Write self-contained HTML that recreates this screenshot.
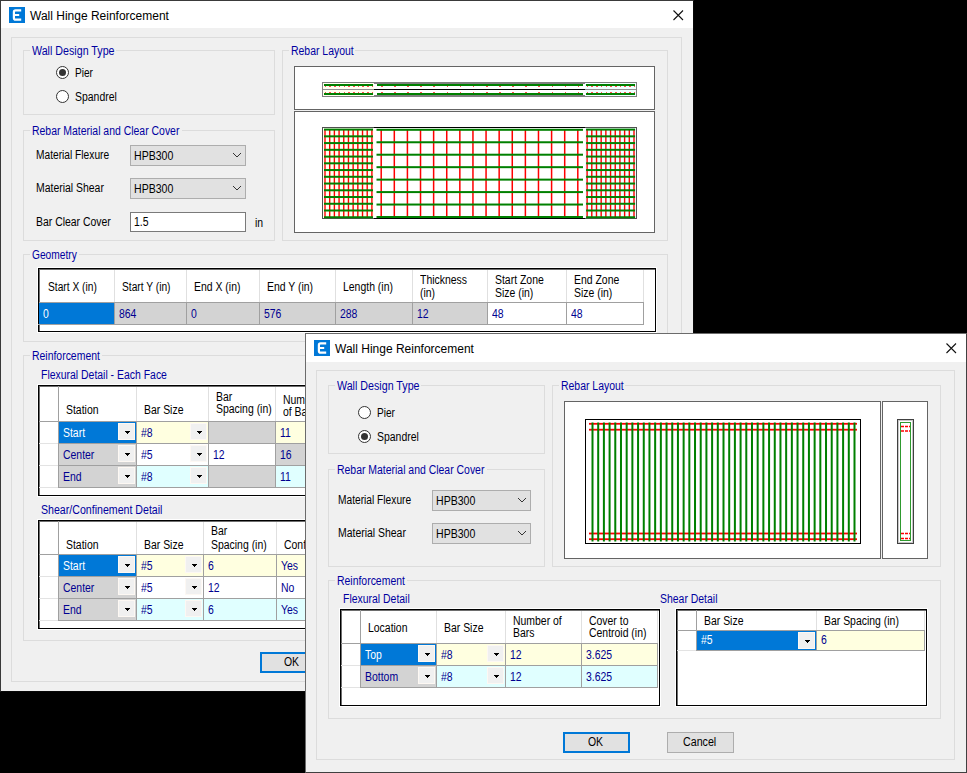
<!DOCTYPE html><html><head><meta charset="utf-8"><style>
*{margin:0;padding:0}
html,body{width:967px;height:773px;overflow:hidden;background:#000;}
body{position:relative;font-family:"Liberation Sans",sans-serif;font-size:12px;}
.a{position:absolute}
.t{position:absolute;white-space:nowrap;line-height:14px;transform-origin:0 0;color:#000;}
.nv{color:#0000a0}
.bk{color:#000}
</style></head><body>
<div class="a" style="left:0;top:0;width:967px;height:773px;overflow:hidden">
<div class="a" style="left:0px;top:0px;width:694px;height:692px;box-sizing:border-box;border:1px solid #3a3a3a;border-right-color:#080808;border-bottom-color:#080808;background:#f0f0f0;"></div>
<div class="a" style="left:1px;top:1px;width:692px;height:27px;background:#fff;"></div>
<div class="a" style="left:9px;top:7px;width:16px;height:16px;background:#0078d7;"></div>
<svg class="a" style="left:9px;top:7px" width="16" height="16"><path d="M12.2 3.4 H6.6 Q4.9 3.4 4.9 5.1 V10.9 Q4.9 12.6 6.6 12.6 H12.2 M4.9 8 H10.2" fill="none" stroke="#fff" stroke-width="2.2"/></svg>
<div class="t bk" style="left:30px;top:9px;">Wall Hinge Reinforcement</div>
<svg class="a" style="left:673px;top:10px" width="11" height="11"><path d="M0.5 0.5 L10 10 M10 0.5 L0.5 10" fill="none" stroke="#111" stroke-width="1.1"/></svg>
<div class="a" style="left:11px;top:37px;width:671px;height:645px;box-sizing:border-box;border:1px solid #dcdcdc;"></div>
<div class="a" style="left:23px;top:50px;width:252px;height:65px;box-sizing:border-box;border:1px solid #dcdcdc;"></div>
<div class="a" style="left:30px;top:49px;width:86px;height:3px;background:#f0f0f0;"></div>
<div class="t nv" style="left:32px;top:44px;transform:scaleX(0.89);">Wall Design Type</div>
<div class="a" style="left:56px;top:66px;width:13px;height:13px;box-sizing:border-box;border:1px solid #333;border-radius:50%;background:#fff;"></div>
<div class="a" style="left:59px;top:69px;width:7px;height:7px;border-radius:50%;background:#333;"></div>
<div class="t bk" style="left:75px;top:66px;transform:scaleX(0.84);">Pier</div>
<div class="a" style="left:56px;top:90px;width:13px;height:13px;box-sizing:border-box;border:1px solid #333;border-radius:50%;background:#fff;"></div>
<div class="t bk" style="left:75px;top:90px;transform:scaleX(0.87);">Spandrel</div>
<div class="a" style="left:23px;top:130px;width:252px;height:111px;box-sizing:border-box;border:1px solid #dcdcdc;"></div>
<div class="a" style="left:30px;top:129px;width:152px;height:3px;background:#f0f0f0;"></div>
<div class="t nv" style="left:32px;top:124px;transform:scaleX(0.87);">Rebar Material and Clear Cover</div>
<div class="t bk" style="left:36px;top:148px;transform:scaleX(0.85);">Material Flexure</div>
<div class="a" style="left:130px;top:145px;width:116px;height:21px;box-sizing:border-box;border:1px solid #adadad;background:#e1e1e1;"></div>
<div class="t bk" style="left:134px;top:149px;transform:scaleX(0.88);">HPB300</div>
<svg class="a" style="left:232px;top:152px" width="10" height="6"><path d="M1 1 L5 5 L9 1" fill="none" stroke="#333" stroke-width="1"/></svg>
<div class="t bk" style="left:36px;top:181px;transform:scaleX(0.87);">Material Shear</div>
<div class="a" style="left:130px;top:178px;width:116px;height:21px;box-sizing:border-box;border:1px solid #adadad;background:#e1e1e1;"></div>
<div class="t bk" style="left:134px;top:182px;transform:scaleX(0.88);">HPB300</div>
<svg class="a" style="left:232px;top:185px" width="10" height="6"><path d="M1 1 L5 5 L9 1" fill="none" stroke="#333" stroke-width="1"/></svg>
<div class="t bk" style="left:36px;top:215px;transform:scaleX(0.87);">Bar Clear Cover</div>
<div class="a" style="left:130px;top:212px;width:116px;height:20px;box-sizing:border-box;border:1px solid #7a7a7a;background:#fff;"></div>
<div class="t bk" style="left:134px;top:215px;transform:scaleX(0.87);">1.5</div>
<div class="t bk" style="left:255px;top:216px;transform:scaleX(0.87);">in</div>
<div class="a" style="left:282px;top:50px;width:386px;height:191px;box-sizing:border-box;border:1px solid #dcdcdc;"></div>
<div class="a" style="left:289px;top:49px;width:66px;height:3px;background:#f0f0f0;"></div>
<div class="t nv" style="left:291px;top:44px;transform:scaleX(0.87);">Rebar Layout</div>
<div class="a" style="left:294px;top:66px;width:361px;height:44px;box-sizing:border-box;border:1px solid #646464;background:#fff;"></div>
<div class="a" style="left:294px;top:111px;width:361px;height:122px;box-sizing:border-box;border:1px solid #646464;background:#fff;"></div>
<svg class="a" style="left:0;top:0" width="967" height="773" shape-rendering="crispEdges">
<rect x="322" y="82" width="315" height="15" fill="#808080"/>
<rect x="323" y="83" width="313" height="13" fill="#fff"/>
<rect x="323" y="83" width="51" height="13" fill="#fffff0"/>
<rect x="585" y="83" width="51" height="13" fill="#f0ffff"/>
<rect x="374" y="83" width="211" height="1" fill="#808080"/>
<rect x="374" y="95" width="211" height="1" fill="#808080"/>
<rect x="323" y="89" width="51" height="1" fill="#909090"/>
<rect x="585" y="89" width="51" height="1" fill="#909090"/>
<rect x="374" y="89" width="211" height="1" fill="#000"/>
<rect x="324" y="84" width="49" height="2" fill="#008000"/>
<rect x="324" y="93" width="49" height="2" fill="#008000"/>
<rect x="376.5" y="84" width="206.5" height="2" fill="#008000"/>
<rect x="376.5" y="93" width="206.5" height="2" fill="#008000"/>
<rect x="586" y="84" width="49" height="2" fill="#008000"/>
<rect x="586" y="93" width="49" height="2" fill="#008000"/>
<rect x="324.7" y="86" width="1.6" height="1" fill="#ff5050"/>
<rect x="324.7" y="92" width="1.6" height="1" fill="#ff5050"/>
<rect x="586.7" y="86" width="1.6" height="1" fill="#ff5050"/>
<rect x="586.7" y="92" width="1.6" height="1" fill="#ff5050"/>
<rect x="329.4" y="86" width="1.6" height="1" fill="#ff5050"/>
<rect x="329.4" y="92" width="1.6" height="1" fill="#ff5050"/>
<rect x="591.4" y="86" width="1.6" height="1" fill="#ff5050"/>
<rect x="591.4" y="92" width="1.6" height="1" fill="#ff5050"/>
<rect x="334.1" y="86" width="1.6" height="1" fill="#ff5050"/>
<rect x="334.1" y="92" width="1.6" height="1" fill="#ff5050"/>
<rect x="596.1" y="86" width="1.6" height="1" fill="#ff5050"/>
<rect x="596.1" y="92" width="1.6" height="1" fill="#ff5050"/>
<rect x="338.8" y="86" width="1.6" height="1" fill="#ff5050"/>
<rect x="338.8" y="92" width="1.6" height="1" fill="#ff5050"/>
<rect x="600.8" y="86" width="1.6" height="1" fill="#ff5050"/>
<rect x="600.8" y="92" width="1.6" height="1" fill="#ff5050"/>
<rect x="343.5" y="86" width="1.6" height="1" fill="#ff5050"/>
<rect x="343.5" y="92" width="1.6" height="1" fill="#ff5050"/>
<rect x="605.5" y="86" width="1.6" height="1" fill="#ff5050"/>
<rect x="605.5" y="92" width="1.6" height="1" fill="#ff5050"/>
<rect x="348.2" y="86" width="1.6" height="1" fill="#ff5050"/>
<rect x="348.2" y="92" width="1.6" height="1" fill="#ff5050"/>
<rect x="610.2" y="86" width="1.6" height="1" fill="#ff5050"/>
<rect x="610.2" y="92" width="1.6" height="1" fill="#ff5050"/>
<rect x="352.9" y="86" width="1.6" height="1" fill="#ff5050"/>
<rect x="352.9" y="92" width="1.6" height="1" fill="#ff5050"/>
<rect x="614.9" y="86" width="1.6" height="1" fill="#ff5050"/>
<rect x="614.9" y="92" width="1.6" height="1" fill="#ff5050"/>
<rect x="357.6" y="86" width="1.6" height="1" fill="#ff5050"/>
<rect x="357.6" y="92" width="1.6" height="1" fill="#ff5050"/>
<rect x="619.6" y="86" width="1.6" height="1" fill="#ff5050"/>
<rect x="619.6" y="92" width="1.6" height="1" fill="#ff5050"/>
<rect x="362.3" y="86" width="1.6" height="1" fill="#ff5050"/>
<rect x="362.3" y="92" width="1.6" height="1" fill="#ff5050"/>
<rect x="624.3" y="86" width="1.6" height="1" fill="#ff5050"/>
<rect x="624.3" y="92" width="1.6" height="1" fill="#ff5050"/>
<rect x="367" y="86" width="1.6" height="1" fill="#ff5050"/>
<rect x="367" y="92" width="1.6" height="1" fill="#ff5050"/>
<rect x="629" y="86" width="1.6" height="1" fill="#ff5050"/>
<rect x="629" y="92" width="1.6" height="1" fill="#ff5050"/>
<rect x="371.7" y="86" width="1.6" height="1" fill="#ff5050"/>
<rect x="371.7" y="92" width="1.6" height="1" fill="#ff5050"/>
<rect x="633.7" y="86" width="1.6" height="1" fill="#ff5050"/>
<rect x="633.7" y="92" width="1.6" height="1" fill="#ff5050"/>
<rect x="380.9" y="86" width="1.6" height="1" fill="#ff5050"/>
<rect x="380.9" y="92" width="1.6" height="1" fill="#ff5050"/>
<rect x="394.03" y="86" width="1.6" height="1" fill="#ff5050"/>
<rect x="394.03" y="92" width="1.6" height="1" fill="#ff5050"/>
<rect x="407.16" y="86" width="1.6" height="1" fill="#ff5050"/>
<rect x="407.16" y="92" width="1.6" height="1" fill="#ff5050"/>
<rect x="420.29" y="86" width="1.6" height="1" fill="#ff5050"/>
<rect x="420.29" y="92" width="1.6" height="1" fill="#ff5050"/>
<rect x="433.42" y="86" width="1.6" height="1" fill="#ff5050"/>
<rect x="433.42" y="92" width="1.6" height="1" fill="#ff5050"/>
<rect x="446.55" y="86" width="1.6" height="1" fill="#ff5050"/>
<rect x="446.55" y="92" width="1.6" height="1" fill="#ff5050"/>
<rect x="459.68" y="86" width="1.6" height="1" fill="#ff5050"/>
<rect x="459.68" y="92" width="1.6" height="1" fill="#ff5050"/>
<rect x="472.81" y="86" width="1.6" height="1" fill="#ff5050"/>
<rect x="472.81" y="92" width="1.6" height="1" fill="#ff5050"/>
<rect x="485.94" y="86" width="1.6" height="1" fill="#ff5050"/>
<rect x="485.94" y="92" width="1.6" height="1" fill="#ff5050"/>
<rect x="499.07" y="86" width="1.6" height="1" fill="#ff5050"/>
<rect x="499.07" y="92" width="1.6" height="1" fill="#ff5050"/>
<rect x="512.2" y="86" width="1.6" height="1" fill="#ff5050"/>
<rect x="512.2" y="92" width="1.6" height="1" fill="#ff5050"/>
<rect x="525.33" y="86" width="1.6" height="1" fill="#ff5050"/>
<rect x="525.33" y="92" width="1.6" height="1" fill="#ff5050"/>
<rect x="538.46" y="86" width="1.6" height="1" fill="#ff5050"/>
<rect x="538.46" y="92" width="1.6" height="1" fill="#ff5050"/>
<rect x="551.59" y="86" width="1.6" height="1" fill="#ff5050"/>
<rect x="551.59" y="92" width="1.6" height="1" fill="#ff5050"/>
<rect x="564.72" y="86" width="1.6" height="1" fill="#ff5050"/>
<rect x="564.72" y="92" width="1.6" height="1" fill="#ff5050"/>
<rect x="577.85" y="86" width="1.6" height="1" fill="#ff5050"/>
<rect x="577.85" y="92" width="1.6" height="1" fill="#ff5050"/>
<rect x="322" y="127" width="315" height="92" fill="#505050"/>
<rect x="323" y="128" width="313" height="90" fill="#fff"/>
<rect x="323" y="128" width="51" height="90" fill="#fffff0"/>
<rect x="585" y="128" width="51" height="90" fill="#f0ffff"/>
<rect x="374" y="127" width="211" height="1" fill="#000"/>
<rect x="374" y="218" width="211" height="1" fill="#000"/>
</svg>
<svg class="a" style="left:0;top:0" width="967" height="773">
<rect x="324.3" y="129" width="1.4" height="89" fill="#ff0000"/>
<rect x="328.99" y="129" width="1.4" height="89" fill="#ff0000"/>
<rect x="333.68" y="129" width="1.4" height="89" fill="#ff0000"/>
<rect x="338.37" y="129" width="1.4" height="89" fill="#ff0000"/>
<rect x="343.06" y="129" width="1.4" height="89" fill="#ff0000"/>
<rect x="347.75" y="129" width="1.4" height="89" fill="#ff0000"/>
<rect x="352.44" y="129" width="1.4" height="89" fill="#ff0000"/>
<rect x="357.13" y="129" width="1.4" height="89" fill="#ff0000"/>
<rect x="361.82" y="129" width="1.4" height="89" fill="#ff0000"/>
<rect x="366.51" y="129" width="1.4" height="89" fill="#ff0000"/>
<rect x="371.2" y="129" width="1.4" height="89" fill="#ff0000"/>
<rect x="324" y="128.6" width="49" height="2" fill="#008000"/>
<rect x="324" y="135.34" width="49" height="2" fill="#008000"/>
<rect x="324" y="142.08" width="49" height="2" fill="#008000"/>
<rect x="324" y="148.83" width="49" height="2" fill="#008000"/>
<rect x="324" y="155.57" width="49" height="2" fill="#008000"/>
<rect x="324" y="162.31" width="49" height="2" fill="#008000"/>
<rect x="324" y="169.05" width="49" height="2" fill="#008000"/>
<rect x="324" y="175.79" width="49" height="2" fill="#008000"/>
<rect x="324" y="182.54" width="49" height="2" fill="#008000"/>
<rect x="324" y="189.28" width="49" height="2" fill="#008000"/>
<rect x="324" y="196.02" width="49" height="2" fill="#008000"/>
<rect x="324" y="202.76" width="49" height="2" fill="#008000"/>
<rect x="324" y="209.5" width="49" height="2" fill="#008000"/>
<rect x="324" y="216.25" width="49" height="2" fill="#008000"/>
<rect x="586.4" y="129" width="1.4" height="89" fill="#ff0000"/>
<rect x="591.09" y="129" width="1.4" height="89" fill="#ff0000"/>
<rect x="595.78" y="129" width="1.4" height="89" fill="#ff0000"/>
<rect x="600.47" y="129" width="1.4" height="89" fill="#ff0000"/>
<rect x="605.16" y="129" width="1.4" height="89" fill="#ff0000"/>
<rect x="609.85" y="129" width="1.4" height="89" fill="#ff0000"/>
<rect x="614.54" y="129" width="1.4" height="89" fill="#ff0000"/>
<rect x="619.23" y="129" width="1.4" height="89" fill="#ff0000"/>
<rect x="623.92" y="129" width="1.4" height="89" fill="#ff0000"/>
<rect x="628.61" y="129" width="1.4" height="89" fill="#ff0000"/>
<rect x="633.3" y="129" width="1.4" height="89" fill="#ff0000"/>
<rect x="586.1" y="128.6" width="49" height="2" fill="#008000"/>
<rect x="586.1" y="135.34" width="49" height="2" fill="#008000"/>
<rect x="586.1" y="142.08" width="49" height="2" fill="#008000"/>
<rect x="586.1" y="148.83" width="49" height="2" fill="#008000"/>
<rect x="586.1" y="155.57" width="49" height="2" fill="#008000"/>
<rect x="586.1" y="162.31" width="49" height="2" fill="#008000"/>
<rect x="586.1" y="169.05" width="49" height="2" fill="#008000"/>
<rect x="586.1" y="175.79" width="49" height="2" fill="#008000"/>
<rect x="586.1" y="182.54" width="49" height="2" fill="#008000"/>
<rect x="586.1" y="189.28" width="49" height="2" fill="#008000"/>
<rect x="586.1" y="196.02" width="49" height="2" fill="#008000"/>
<rect x="586.1" y="202.76" width="49" height="2" fill="#008000"/>
<rect x="586.1" y="209.5" width="49" height="2" fill="#008000"/>
<rect x="586.1" y="216.25" width="49" height="2" fill="#008000"/>
<rect x="380.45" y="129" width="1.5" height="89" fill="#ff0000"/>
<rect x="393.56" y="129" width="1.5" height="89" fill="#ff0000"/>
<rect x="406.66" y="129" width="1.5" height="89" fill="#ff0000"/>
<rect x="419.77" y="129" width="1.5" height="89" fill="#ff0000"/>
<rect x="432.88" y="129" width="1.5" height="89" fill="#ff0000"/>
<rect x="445.99" y="129" width="1.5" height="89" fill="#ff0000"/>
<rect x="459.09" y="129" width="1.5" height="89" fill="#ff0000"/>
<rect x="472.2" y="129" width="1.5" height="89" fill="#ff0000"/>
<rect x="485.31" y="129" width="1.5" height="89" fill="#ff0000"/>
<rect x="498.41" y="129" width="1.5" height="89" fill="#ff0000"/>
<rect x="511.52" y="129" width="1.5" height="89" fill="#ff0000"/>
<rect x="524.63" y="129" width="1.5" height="89" fill="#ff0000"/>
<rect x="537.73" y="129" width="1.5" height="89" fill="#ff0000"/>
<rect x="550.84" y="129" width="1.5" height="89" fill="#ff0000"/>
<rect x="563.95" y="129" width="1.5" height="89" fill="#ff0000"/>
<rect x="577.05" y="129" width="1.5" height="89" fill="#ff0000"/>
<rect x="376.5" y="128.8" width="206.5" height="2" fill="#008000"/>
<rect x="376.5" y="141.26" width="206.5" height="2" fill="#008000"/>
<rect x="376.5" y="153.71" width="206.5" height="2" fill="#008000"/>
<rect x="376.5" y="166.17" width="206.5" height="2" fill="#008000"/>
<rect x="376.5" y="178.63" width="206.5" height="2" fill="#008000"/>
<rect x="376.5" y="191.09" width="206.5" height="2" fill="#008000"/>
<rect x="376.5" y="203.54" width="206.5" height="2" fill="#008000"/>
<rect x="376.5" y="216" width="206.5" height="2" fill="#008000"/>
</svg>
<div class="a" style="left:23px;top:254px;width:645px;height:88px;box-sizing:border-box;border:1px solid #dcdcdc;"></div>
<div class="a" style="left:30px;top:253px;width:49px;height:3px;background:#f0f0f0;"></div>
<div class="t nv" style="left:32px;top:248px;transform:scaleX(0.85);">Geometry</div>
<div class="a" style="left:37px;top:267px;width:620px;height:66px;box-sizing:border-box;border:1px solid #fff;"></div>
<div class="a" style="left:38px;top:268px;width:618px;height:64px;box-sizing:border-box;border:1px solid #000;background:#fff;"></div>
<div class="a" style="left:39px;top:269px;width:616px;height:1px;background:#6e6e6e;"></div>
<div class="a" style="left:39px;top:269px;width:1px;height:62px;background:#6e6e6e;"></div>
<div class="a" style="left:114px;top:270px;width:1px;height:32px;background:#e0e0e0;"></div>
<div class="a" style="left:186px;top:270px;width:1px;height:32px;background:#e0e0e0;"></div>
<div class="a" style="left:259px;top:270px;width:1px;height:32px;background:#e0e0e0;"></div>
<div class="a" style="left:335px;top:270px;width:1px;height:32px;background:#e0e0e0;"></div>
<div class="a" style="left:412px;top:270px;width:1px;height:32px;background:#e0e0e0;"></div>
<div class="a" style="left:487px;top:270px;width:1px;height:32px;background:#e0e0e0;"></div>
<div class="a" style="left:566px;top:270px;width:1px;height:32px;background:#e0e0e0;"></div>
<div class="a" style="left:643px;top:270px;width:1px;height:32px;background:#e0e0e0;"></div>
<div class="a" style="left:39px;top:302px;width:605px;height:1px;background:#a0a0a0;"></div>
<div class="t bk" style="left:48px;top:280px;transform:scaleX(0.852);">Start X (in)</div>
<div class="t bk" style="left:122px;top:280px;transform:scaleX(0.852);">Start Y (in)</div>
<div class="t bk" style="left:194px;top:280px;transform:scaleX(0.87);">End X (in)</div>
<div class="t bk" style="left:267px;top:280px;transform:scaleX(0.87);">End Y (in)</div>
<div class="t bk" style="left:343px;top:280px;transform:scaleX(0.87);">Length (in)</div>
<div class="t bk" style="left:420px;top:273px;transform:scaleX(0.87);">Thickness</div>
<div class="t bk" style="left:420px;top:286px;transform:scaleX(0.87);">(in)</div>
<div class="t bk" style="left:495px;top:273px;transform:scaleX(0.87);">Start Zone</div>
<div class="t bk" style="left:495px;top:286px;transform:scaleX(0.87);">Size (in)</div>
<div class="t bk" style="left:574px;top:273px;transform:scaleX(0.87);">End Zone</div>
<div class="t bk" style="left:574px;top:286px;transform:scaleX(0.87);">Size (in)</div>
<div class="a" style="left:39px;top:303px;width:75px;height:21px;background:#0078d7;"></div>
<div class="a" style="left:114px;top:302px;width:1px;height:23px;background:#a0a0a0;"></div>
<div class="a" style="left:38px;top:324px;width:77px;height:1px;background:#a0a0a0;"></div>
<div class="t " style="left:42.5px;top:307px;color:#fff;transform:scaleX(0.87);">0</div>
<div class="a" style="left:115px;top:303px;width:71px;height:21px;background:#d3d3d3;"></div>
<div class="a" style="left:186px;top:302px;width:1px;height:23px;background:#a0a0a0;"></div>
<div class="a" style="left:114px;top:324px;width:73px;height:1px;background:#a0a0a0;"></div>
<div class="t " style="left:118.5px;top:307px;color:#000090;transform:scaleX(0.87);">864</div>
<div class="a" style="left:187px;top:303px;width:72px;height:21px;background:#d3d3d3;"></div>
<div class="a" style="left:259px;top:302px;width:1px;height:23px;background:#a0a0a0;"></div>
<div class="a" style="left:186px;top:324px;width:74px;height:1px;background:#a0a0a0;"></div>
<div class="t " style="left:190.5px;top:307px;color:#000090;transform:scaleX(0.87);">0</div>
<div class="a" style="left:260px;top:303px;width:75px;height:21px;background:#d3d3d3;"></div>
<div class="a" style="left:335px;top:302px;width:1px;height:23px;background:#a0a0a0;"></div>
<div class="a" style="left:259px;top:324px;width:77px;height:1px;background:#a0a0a0;"></div>
<div class="t " style="left:263.5px;top:307px;color:#000090;transform:scaleX(0.87);">576</div>
<div class="a" style="left:336px;top:303px;width:76px;height:21px;background:#d3d3d3;"></div>
<div class="a" style="left:412px;top:302px;width:1px;height:23px;background:#a0a0a0;"></div>
<div class="a" style="left:335px;top:324px;width:78px;height:1px;background:#a0a0a0;"></div>
<div class="t " style="left:339.5px;top:307px;color:#000090;transform:scaleX(0.87);">288</div>
<div class="a" style="left:413px;top:303px;width:74px;height:21px;background:#d3d3d3;"></div>
<div class="a" style="left:487px;top:302px;width:1px;height:23px;background:#a0a0a0;"></div>
<div class="a" style="left:412px;top:324px;width:76px;height:1px;background:#a0a0a0;"></div>
<div class="t " style="left:416.5px;top:307px;color:#000090;transform:scaleX(0.87);">12</div>
<div class="a" style="left:488px;top:303px;width:78px;height:21px;background:#fff;"></div>
<div class="a" style="left:566px;top:302px;width:1px;height:23px;background:#a0a0a0;"></div>
<div class="a" style="left:487px;top:324px;width:80px;height:1px;background:#a0a0a0;"></div>
<div class="t " style="left:491.5px;top:307px;color:#000090;transform:scaleX(0.87);">48</div>
<div class="a" style="left:567px;top:303px;width:76px;height:21px;background:#fff;"></div>
<div class="a" style="left:643px;top:302px;width:1px;height:23px;background:#a0a0a0;"></div>
<div class="a" style="left:566px;top:324px;width:78px;height:1px;background:#a0a0a0;"></div>
<div class="t " style="left:570.5px;top:307px;color:#000090;transform:scaleX(0.87);">48</div>
<div class="a" style="left:23px;top:355px;width:645px;height:286px;box-sizing:border-box;border:1px solid #dcdcdc;"></div>
<div class="a" style="left:30px;top:354px;width:72px;height:3px;background:#f0f0f0;"></div>
<div class="t nv" style="left:32px;top:349px;transform:scaleX(0.87);">Reinforcement</div>
<div class="t nv" style="left:41px;top:368px;transform:scaleX(0.87);">Flexural Detail - Each Face</div>
<div class="a" style="left:37px;top:384px;width:665px;height:113px;box-sizing:border-box;border:1px solid #fff;"></div>
<div class="a" style="left:38px;top:385px;width:663px;height:111px;box-sizing:border-box;border:1px solid #000;background:#fff;"></div>
<div class="a" style="left:39px;top:386px;width:661px;height:1px;background:#6e6e6e;"></div>
<div class="a" style="left:39px;top:386px;width:1px;height:109px;background:#6e6e6e;"></div>
<div class="a" style="left:58px;top:386px;width:1px;height:102px;background:#a0a0a0;"></div>
<div class="a" style="left:136px;top:387px;width:1px;height:34px;background:#e0e0e0;"></div>
<div class="a" style="left:208px;top:387px;width:1px;height:34px;background:#e0e0e0;"></div>
<div class="a" style="left:275px;top:387px;width:1px;height:34px;background:#e0e0e0;"></div>
<div class="a" style="left:360px;top:387px;width:1px;height:34px;background:#e0e0e0;"></div>
<div class="a" style="left:39px;top:421px;width:322px;height:1px;background:#a0a0a0;"></div>
<div class="t bk" style="left:66px;top:403px;transform:scaleX(0.87);">Station</div>
<div class="t bk" style="left:144px;top:403px;transform:scaleX(0.87);">Bar Size</div>
<div class="t bk" style="left:216px;top:390px;transform:scaleX(0.87);">Bar</div>
<div class="t bk" style="left:216px;top:402px;transform:scaleX(0.87);">Spacing (in)</div>
<div class="t bk" style="left:283px;top:393px;transform:scaleX(0.87);">Number</div>
<div class="t bk" style="left:283px;top:405px;transform:scaleX(0.87);">of Bars</div>
<div class="a" style="left:39px;top:443px;width:19px;height:1px;background:#e3e3e3;"></div>
<div class="a" style="left:59px;top:422px;width:77px;height:21px;background:#0078d7;"></div>
<div class="a" style="left:136px;top:421px;width:1px;height:23px;background:#a0a0a0;"></div>
<div class="a" style="left:58px;top:443px;width:79px;height:1px;background:#a0a0a0;"></div>
<div class="t " style="left:62.5px;top:426px;color:#fff;transform:scaleX(0.87);">Start</div>
<div class="a" style="left:118px;top:423px;width:17px;height:17px;box-sizing:border-box;border:1px solid #fdf8f3;background:#f0f0f0;"></div>
<svg class="a" style="left:125px;top:431px" width="5" height="3" shape-rendering="crispEdges"><path d="M0 0h5v1h-1v1h-1v1h-1v-1h-1v-1h-1z" fill="#000"/></svg>
<div class="a" style="left:137px;top:422px;width:71px;height:21px;background:#ffffe0;"></div>
<div class="a" style="left:208px;top:421px;width:1px;height:23px;background:#a0a0a0;"></div>
<div class="a" style="left:136px;top:443px;width:73px;height:1px;background:#a0a0a0;"></div>
<div class="t " style="left:140.5px;top:426px;color:#000090;transform:scaleX(0.87);">#8</div>
<div class="a" style="left:190px;top:423px;width:17px;height:17px;box-sizing:border-box;border:1px solid #fdf8f3;background:#f0f0f0;"></div>
<svg class="a" style="left:197px;top:431px" width="5" height="3" shape-rendering="crispEdges"><path d="M0 0h5v1h-1v1h-1v1h-1v-1h-1v-1h-1z" fill="#000"/></svg>
<div class="a" style="left:209px;top:422px;width:66px;height:21px;background:#d3d3d3;"></div>
<div class="a" style="left:275px;top:421px;width:1px;height:23px;background:#a0a0a0;"></div>
<div class="a" style="left:208px;top:443px;width:68px;height:1px;background:#a0a0a0;"></div>
<div class="a" style="left:276px;top:422px;width:84px;height:21px;background:#ffffe0;"></div>
<div class="a" style="left:360px;top:421px;width:1px;height:23px;background:#a0a0a0;"></div>
<div class="a" style="left:275px;top:443px;width:86px;height:1px;background:#a0a0a0;"></div>
<div class="t " style="left:279.5px;top:426px;color:#000090;transform:scaleX(0.87);">11</div>
<div class="a" style="left:39px;top:465px;width:19px;height:1px;background:#e3e3e3;"></div>
<div class="a" style="left:59px;top:444px;width:77px;height:21px;background:#d3d3d3;"></div>
<div class="a" style="left:136px;top:443px;width:1px;height:23px;background:#a0a0a0;"></div>
<div class="a" style="left:58px;top:465px;width:79px;height:1px;background:#a0a0a0;"></div>
<div class="t " style="left:62.5px;top:448px;color:#000090;transform:scaleX(0.87);">Center</div>
<div class="a" style="left:118px;top:445px;width:17px;height:17px;box-sizing:border-box;border:1px solid #fdf8f3;background:#f0f0f0;"></div>
<svg class="a" style="left:125px;top:453px" width="5" height="3" shape-rendering="crispEdges"><path d="M0 0h5v1h-1v1h-1v1h-1v-1h-1v-1h-1z" fill="#000"/></svg>
<div class="a" style="left:137px;top:444px;width:71px;height:21px;background:#fff;"></div>
<div class="a" style="left:208px;top:443px;width:1px;height:23px;background:#a0a0a0;"></div>
<div class="a" style="left:136px;top:465px;width:73px;height:1px;background:#a0a0a0;"></div>
<div class="t " style="left:140.5px;top:448px;color:#000090;transform:scaleX(0.87);">#5</div>
<div class="a" style="left:190px;top:445px;width:17px;height:17px;box-sizing:border-box;border:1px solid #fdf8f3;background:#f0f0f0;"></div>
<svg class="a" style="left:197px;top:453px" width="5" height="3" shape-rendering="crispEdges"><path d="M0 0h5v1h-1v1h-1v1h-1v-1h-1v-1h-1z" fill="#000"/></svg>
<div class="a" style="left:209px;top:444px;width:66px;height:21px;background:#fff;"></div>
<div class="a" style="left:275px;top:443px;width:1px;height:23px;background:#a0a0a0;"></div>
<div class="a" style="left:208px;top:465px;width:68px;height:1px;background:#a0a0a0;"></div>
<div class="t " style="left:212.5px;top:448px;color:#000090;transform:scaleX(0.87);">12</div>
<div class="a" style="left:276px;top:444px;width:84px;height:21px;background:#d3d3d3;"></div>
<div class="a" style="left:360px;top:443px;width:1px;height:23px;background:#a0a0a0;"></div>
<div class="a" style="left:275px;top:465px;width:86px;height:1px;background:#a0a0a0;"></div>
<div class="t " style="left:279.5px;top:448px;color:#000090;transform:scaleX(0.87);">16</div>
<div class="a" style="left:39px;top:487px;width:19px;height:1px;background:#e3e3e3;"></div>
<div class="a" style="left:59px;top:466px;width:77px;height:21px;background:#d3d3d3;"></div>
<div class="a" style="left:136px;top:465px;width:1px;height:23px;background:#a0a0a0;"></div>
<div class="a" style="left:58px;top:487px;width:79px;height:1px;background:#a0a0a0;"></div>
<div class="t " style="left:62.5px;top:470px;color:#000090;transform:scaleX(0.87);">End</div>
<div class="a" style="left:118px;top:467px;width:17px;height:17px;box-sizing:border-box;border:1px solid #fdf8f3;background:#f0f0f0;"></div>
<svg class="a" style="left:125px;top:475px" width="5" height="3" shape-rendering="crispEdges"><path d="M0 0h5v1h-1v1h-1v1h-1v-1h-1v-1h-1z" fill="#000"/></svg>
<div class="a" style="left:137px;top:466px;width:71px;height:21px;background:#e0ffff;"></div>
<div class="a" style="left:208px;top:465px;width:1px;height:23px;background:#a0a0a0;"></div>
<div class="a" style="left:136px;top:487px;width:73px;height:1px;background:#a0a0a0;"></div>
<div class="t " style="left:140.5px;top:470px;color:#000090;transform:scaleX(0.87);">#8</div>
<div class="a" style="left:190px;top:467px;width:17px;height:17px;box-sizing:border-box;border:1px solid #fdf8f3;background:#f0f0f0;"></div>
<svg class="a" style="left:197px;top:475px" width="5" height="3" shape-rendering="crispEdges"><path d="M0 0h5v1h-1v1h-1v1h-1v-1h-1v-1h-1z" fill="#000"/></svg>
<div class="a" style="left:209px;top:466px;width:66px;height:21px;background:#d3d3d3;"></div>
<div class="a" style="left:275px;top:465px;width:1px;height:23px;background:#a0a0a0;"></div>
<div class="a" style="left:208px;top:487px;width:68px;height:1px;background:#a0a0a0;"></div>
<div class="a" style="left:276px;top:466px;width:84px;height:21px;background:#e0ffff;"></div>
<div class="a" style="left:360px;top:465px;width:1px;height:23px;background:#a0a0a0;"></div>
<div class="a" style="left:275px;top:487px;width:86px;height:1px;background:#a0a0a0;"></div>
<div class="t " style="left:279.5px;top:470px;color:#000090;transform:scaleX(0.87);">11</div>
<div class="t nv" style="left:41px;top:503px;transform:scaleX(0.884);">Shear/Confinement Detail</div>
<div class="a" style="left:37px;top:519px;width:665px;height:111px;box-sizing:border-box;border:1px solid #fff;"></div>
<div class="a" style="left:38px;top:520px;width:663px;height:109px;box-sizing:border-box;border:1px solid #000;background:#fff;"></div>
<div class="a" style="left:39px;top:521px;width:661px;height:1px;background:#6e6e6e;"></div>
<div class="a" style="left:39px;top:521px;width:1px;height:107px;background:#6e6e6e;"></div>
<div class="a" style="left:58px;top:521px;width:1px;height:100px;background:#a0a0a0;"></div>
<div class="a" style="left:136px;top:522px;width:1px;height:32px;background:#e0e0e0;"></div>
<div class="a" style="left:203px;top:522px;width:1px;height:32px;background:#e0e0e0;"></div>
<div class="a" style="left:276px;top:522px;width:1px;height:32px;background:#e0e0e0;"></div>
<div class="a" style="left:360px;top:522px;width:1px;height:32px;background:#e0e0e0;"></div>
<div class="a" style="left:39px;top:554px;width:322px;height:1px;background:#a0a0a0;"></div>
<div class="t bk" style="left:66px;top:538px;transform:scaleX(0.87);">Station</div>
<div class="t bk" style="left:144px;top:538px;transform:scaleX(0.87);">Bar Size</div>
<div class="t bk" style="left:211px;top:524px;transform:scaleX(0.87);">Bar</div>
<div class="t bk" style="left:211px;top:538px;transform:scaleX(0.87);">Spacing (in)</div>
<div class="t bk" style="left:284px;top:538px;transform:scaleX(0.87);">Confinement</div>
<div class="a" style="left:39px;top:576px;width:19px;height:1px;background:#e3e3e3;"></div>
<div class="a" style="left:59px;top:555px;width:77px;height:21px;background:#0078d7;"></div>
<div class="a" style="left:136px;top:554px;width:1px;height:23px;background:#a0a0a0;"></div>
<div class="a" style="left:58px;top:576px;width:79px;height:1px;background:#a0a0a0;"></div>
<div class="t " style="left:62.5px;top:559px;color:#fff;transform:scaleX(0.87);">Start</div>
<div class="a" style="left:118px;top:556px;width:17px;height:17px;box-sizing:border-box;border:1px solid #fdf8f3;background:#f0f0f0;"></div>
<svg class="a" style="left:125px;top:564px" width="5" height="3" shape-rendering="crispEdges"><path d="M0 0h5v1h-1v1h-1v1h-1v-1h-1v-1h-1z" fill="#000"/></svg>
<div class="a" style="left:137px;top:555px;width:66px;height:21px;background:#ffffe0;"></div>
<div class="a" style="left:203px;top:554px;width:1px;height:23px;background:#a0a0a0;"></div>
<div class="a" style="left:136px;top:576px;width:68px;height:1px;background:#a0a0a0;"></div>
<div class="t " style="left:140.5px;top:559px;color:#000090;transform:scaleX(0.87);">#5</div>
<div class="a" style="left:185px;top:556px;width:17px;height:17px;box-sizing:border-box;border:1px solid #fdf8f3;background:#f0f0f0;"></div>
<svg class="a" style="left:192px;top:564px" width="5" height="3" shape-rendering="crispEdges"><path d="M0 0h5v1h-1v1h-1v1h-1v-1h-1v-1h-1z" fill="#000"/></svg>
<div class="a" style="left:204px;top:555px;width:72px;height:21px;background:#ffffe0;"></div>
<div class="a" style="left:276px;top:554px;width:1px;height:23px;background:#a0a0a0;"></div>
<div class="a" style="left:203px;top:576px;width:74px;height:1px;background:#a0a0a0;"></div>
<div class="t " style="left:207.5px;top:559px;color:#000090;transform:scaleX(0.87);">6</div>
<div class="a" style="left:277px;top:555px;width:83px;height:21px;background:#ffffe0;"></div>
<div class="a" style="left:360px;top:554px;width:1px;height:23px;background:#a0a0a0;"></div>
<div class="a" style="left:276px;top:576px;width:85px;height:1px;background:#a0a0a0;"></div>
<div class="t " style="left:280.5px;top:559px;color:#000090;transform:scaleX(0.87);">Yes</div>
<div class="a" style="left:39px;top:598px;width:19px;height:1px;background:#e3e3e3;"></div>
<div class="a" style="left:59px;top:577px;width:77px;height:21px;background:#d3d3d3;"></div>
<div class="a" style="left:136px;top:576px;width:1px;height:23px;background:#a0a0a0;"></div>
<div class="a" style="left:58px;top:598px;width:79px;height:1px;background:#a0a0a0;"></div>
<div class="t " style="left:62.5px;top:581px;color:#000090;transform:scaleX(0.87);">Center</div>
<div class="a" style="left:118px;top:578px;width:17px;height:17px;box-sizing:border-box;border:1px solid #fdf8f3;background:#f0f0f0;"></div>
<svg class="a" style="left:125px;top:586px" width="5" height="3" shape-rendering="crispEdges"><path d="M0 0h5v1h-1v1h-1v1h-1v-1h-1v-1h-1z" fill="#000"/></svg>
<div class="a" style="left:137px;top:577px;width:66px;height:21px;background:#fff;"></div>
<div class="a" style="left:203px;top:576px;width:1px;height:23px;background:#a0a0a0;"></div>
<div class="a" style="left:136px;top:598px;width:68px;height:1px;background:#a0a0a0;"></div>
<div class="t " style="left:140.5px;top:581px;color:#000090;transform:scaleX(0.87);">#5</div>
<div class="a" style="left:185px;top:578px;width:17px;height:17px;box-sizing:border-box;border:1px solid #fdf8f3;background:#f0f0f0;"></div>
<svg class="a" style="left:192px;top:586px" width="5" height="3" shape-rendering="crispEdges"><path d="M0 0h5v1h-1v1h-1v1h-1v-1h-1v-1h-1z" fill="#000"/></svg>
<div class="a" style="left:204px;top:577px;width:72px;height:21px;background:#fff;"></div>
<div class="a" style="left:276px;top:576px;width:1px;height:23px;background:#a0a0a0;"></div>
<div class="a" style="left:203px;top:598px;width:74px;height:1px;background:#a0a0a0;"></div>
<div class="t " style="left:207.5px;top:581px;color:#000090;transform:scaleX(0.87);">12</div>
<div class="a" style="left:277px;top:577px;width:83px;height:21px;background:#fff;"></div>
<div class="a" style="left:360px;top:576px;width:1px;height:23px;background:#a0a0a0;"></div>
<div class="a" style="left:276px;top:598px;width:85px;height:1px;background:#a0a0a0;"></div>
<div class="t " style="left:280.5px;top:581px;color:#000090;transform:scaleX(0.87);">No</div>
<div class="a" style="left:39px;top:620px;width:19px;height:1px;background:#e3e3e3;"></div>
<div class="a" style="left:59px;top:599px;width:77px;height:21px;background:#d3d3d3;"></div>
<div class="a" style="left:136px;top:598px;width:1px;height:23px;background:#a0a0a0;"></div>
<div class="a" style="left:58px;top:620px;width:79px;height:1px;background:#a0a0a0;"></div>
<div class="t " style="left:62.5px;top:603px;color:#000090;transform:scaleX(0.87);">End</div>
<div class="a" style="left:118px;top:600px;width:17px;height:17px;box-sizing:border-box;border:1px solid #fdf8f3;background:#f0f0f0;"></div>
<svg class="a" style="left:125px;top:608px" width="5" height="3" shape-rendering="crispEdges"><path d="M0 0h5v1h-1v1h-1v1h-1v-1h-1v-1h-1z" fill="#000"/></svg>
<div class="a" style="left:137px;top:599px;width:66px;height:21px;background:#e0ffff;"></div>
<div class="a" style="left:203px;top:598px;width:1px;height:23px;background:#a0a0a0;"></div>
<div class="a" style="left:136px;top:620px;width:68px;height:1px;background:#a0a0a0;"></div>
<div class="t " style="left:140.5px;top:603px;color:#000090;transform:scaleX(0.87);">#5</div>
<div class="a" style="left:185px;top:600px;width:17px;height:17px;box-sizing:border-box;border:1px solid #fdf8f3;background:#f0f0f0;"></div>
<svg class="a" style="left:192px;top:608px" width="5" height="3" shape-rendering="crispEdges"><path d="M0 0h5v1h-1v1h-1v1h-1v-1h-1v-1h-1z" fill="#000"/></svg>
<div class="a" style="left:204px;top:599px;width:72px;height:21px;background:#e0ffff;"></div>
<div class="a" style="left:276px;top:598px;width:1px;height:23px;background:#a0a0a0;"></div>
<div class="a" style="left:203px;top:620px;width:74px;height:1px;background:#a0a0a0;"></div>
<div class="t " style="left:207.5px;top:603px;color:#000090;transform:scaleX(0.87);">6</div>
<div class="a" style="left:277px;top:599px;width:83px;height:21px;background:#e0ffff;"></div>
<div class="a" style="left:360px;top:598px;width:1px;height:23px;background:#a0a0a0;"></div>
<div class="a" style="left:276px;top:620px;width:85px;height:1px;background:#a0a0a0;"></div>
<div class="t " style="left:280.5px;top:603px;color:#000090;transform:scaleX(0.87);">Yes</div>
<div class="a" style="left:260px;top:652px;width:66px;height:21px;box-sizing:border-box;border:2px solid #0078d7;background:#e1e1e1;"></div>
<div class="t bk" style="left:284.3px;top:655px;transform:scaleX(0.87);">OK</div>
</div>
<div class="a" style="left:305px;top:333px;width:662px;height:440px;box-sizing:border-box;border:1px solid #6b6b6b;border-right-color:#404040;border-bottom-color:#404040;background:#f0f0f0;"></div>
<div class="a" style="left:306px;top:334px;width:660px;height:28px;background:#fff;"></div>
<div class="a" style="left:314px;top:340px;width:16px;height:16px;background:#0078d7;"></div>
<svg class="a" style="left:314px;top:340px" width="16" height="16"><path d="M12.2 3.4 H6.6 Q4.9 3.4 4.9 5.1 V10.9 Q4.9 12.6 6.6 12.6 H12.2 M4.9 8 H10.2" fill="none" stroke="#fff" stroke-width="2.2"/></svg>
<div class="t bk" style="left:335px;top:342px;">Wall Hinge Reinforcement</div>
<svg class="a" style="left:946px;top:343px" width="11" height="11"><path d="M0.5 0.5 L10 10 M10 0.5 L0.5 10" fill="none" stroke="#111" stroke-width="1.1"/></svg>
<div class="a" style="left:316px;top:370px;width:639px;height:390px;box-sizing:border-box;border:1px solid #dcdcdc;"></div>
<div class="a" style="left:328px;top:385px;width:217px;height:69px;box-sizing:border-box;border:1px solid #dcdcdc;"></div>
<div class="a" style="left:335px;top:384px;width:86px;height:3px;background:#f0f0f0;"></div>
<div class="t nv" style="left:337px;top:379px;transform:scaleX(0.89);">Wall Design Type</div>
<div class="a" style="left:358px;top:406px;width:13px;height:13px;box-sizing:border-box;border:1px solid #333;border-radius:50%;background:#fff;"></div>
<div class="t bk" style="left:377px;top:406px;transform:scaleX(0.84);">Pier</div>
<div class="a" style="left:358px;top:430px;width:13px;height:13px;box-sizing:border-box;border:1px solid #333;border-radius:50%;background:#fff;"></div>
<div class="a" style="left:361px;top:433px;width:7px;height:7px;border-radius:50%;background:#333;"></div>
<div class="t bk" style="left:377px;top:430px;transform:scaleX(0.87);">Spandrel</div>
<div class="a" style="left:328px;top:469px;width:217px;height:98px;box-sizing:border-box;border:1px solid #dcdcdc;"></div>
<div class="a" style="left:335px;top:468px;width:152px;height:3px;background:#f0f0f0;"></div>
<div class="t nv" style="left:337px;top:463px;transform:scaleX(0.87);">Rebar Material and Clear Cover</div>
<div class="t bk" style="left:338px;top:493px;transform:scaleX(0.85);">Material Flexure</div>
<div class="a" style="left:432px;top:490px;width:99px;height:21px;box-sizing:border-box;border:1px solid #adadad;background:#e1e1e1;"></div>
<div class="t bk" style="left:436px;top:494px;transform:scaleX(0.88);">HPB300</div>
<svg class="a" style="left:517px;top:497px" width="10" height="6"><path d="M1 1 L5 5 L9 1" fill="none" stroke="#333" stroke-width="1"/></svg>
<div class="t bk" style="left:338px;top:526px;transform:scaleX(0.87);">Material Shear</div>
<div class="a" style="left:432px;top:523px;width:99px;height:21px;box-sizing:border-box;border:1px solid #adadad;background:#e1e1e1;"></div>
<div class="t bk" style="left:436px;top:527px;transform:scaleX(0.88);">HPB300</div>
<svg class="a" style="left:517px;top:530px" width="10" height="6"><path d="M1 1 L5 5 L9 1" fill="none" stroke="#333" stroke-width="1"/></svg>
<div class="a" style="left:552px;top:385px;width:389px;height:182px;box-sizing:border-box;border:1px solid #dcdcdc;"></div>
<div class="a" style="left:559px;top:384px;width:66px;height:3px;background:#f0f0f0;"></div>
<div class="t nv" style="left:561px;top:379px;transform:scaleX(0.87);">Rebar Layout</div>
<div class="a" style="left:564px;top:401px;width:317px;height:158px;box-sizing:border-box;border:1px solid #646464;background:#fff;"></div>
<div class="a" style="left:882px;top:401px;width:46px;height:158px;box-sizing:border-box;border:1px solid #646464;background:#fff;"></div>
<svg class="a" style="left:0;top:0" width="967" height="773">
<rect x="585.5" y="419.5" width="275" height="124" fill="#fff" stroke="#000" stroke-width="1"/>
<rect x="589" y="422.9" width="268" height="1.8" fill="#ff0000"/>
<rect x="589" y="428.8" width="268" height="1.8" fill="#ff0000"/>
<rect x="589" y="532.6" width="268" height="1.8" fill="#ff0000"/>
<rect x="589" y="538.3" width="268" height="1.8" fill="#ff0000"/>
<rect x="591.5" y="422.5" width="2" height="119" fill="#008000"/>
<rect x="597.2" y="422.5" width="2" height="119" fill="#008000"/>
<rect x="602.89" y="422.5" width="2" height="119" fill="#008000"/>
<rect x="608.59" y="422.5" width="2" height="119" fill="#008000"/>
<rect x="614.28" y="422.5" width="2" height="119" fill="#008000"/>
<rect x="619.98" y="422.5" width="2" height="119" fill="#008000"/>
<rect x="625.67" y="422.5" width="2" height="119" fill="#008000"/>
<rect x="631.37" y="422.5" width="2" height="119" fill="#008000"/>
<rect x="637.07" y="422.5" width="2" height="119" fill="#008000"/>
<rect x="642.76" y="422.5" width="2" height="119" fill="#008000"/>
<rect x="648.46" y="422.5" width="2" height="119" fill="#008000"/>
<rect x="654.15" y="422.5" width="2" height="119" fill="#008000"/>
<rect x="659.85" y="422.5" width="2" height="119" fill="#008000"/>
<rect x="665.54" y="422.5" width="2" height="119" fill="#008000"/>
<rect x="671.24" y="422.5" width="2" height="119" fill="#008000"/>
<rect x="676.93" y="422.5" width="2" height="119" fill="#008000"/>
<rect x="682.63" y="422.5" width="2" height="119" fill="#008000"/>
<rect x="688.33" y="422.5" width="2" height="119" fill="#008000"/>
<rect x="694.02" y="422.5" width="2" height="119" fill="#008000"/>
<rect x="699.72" y="422.5" width="2" height="119" fill="#008000"/>
<rect x="705.41" y="422.5" width="2" height="119" fill="#008000"/>
<rect x="711.11" y="422.5" width="2" height="119" fill="#008000"/>
<rect x="716.8" y="422.5" width="2" height="119" fill="#008000"/>
<rect x="722.5" y="422.5" width="2" height="119" fill="#008000"/>
<rect x="728.2" y="422.5" width="2" height="119" fill="#008000"/>
<rect x="733.89" y="422.5" width="2" height="119" fill="#008000"/>
<rect x="739.59" y="422.5" width="2" height="119" fill="#008000"/>
<rect x="745.28" y="422.5" width="2" height="119" fill="#008000"/>
<rect x="750.98" y="422.5" width="2" height="119" fill="#008000"/>
<rect x="756.67" y="422.5" width="2" height="119" fill="#008000"/>
<rect x="762.37" y="422.5" width="2" height="119" fill="#008000"/>
<rect x="768.07" y="422.5" width="2" height="119" fill="#008000"/>
<rect x="773.76" y="422.5" width="2" height="119" fill="#008000"/>
<rect x="779.46" y="422.5" width="2" height="119" fill="#008000"/>
<rect x="785.15" y="422.5" width="2" height="119" fill="#008000"/>
<rect x="790.85" y="422.5" width="2" height="119" fill="#008000"/>
<rect x="796.54" y="422.5" width="2" height="119" fill="#008000"/>
<rect x="802.24" y="422.5" width="2" height="119" fill="#008000"/>
<rect x="807.93" y="422.5" width="2" height="119" fill="#008000"/>
<rect x="813.63" y="422.5" width="2" height="119" fill="#008000"/>
<rect x="819.33" y="422.5" width="2" height="119" fill="#008000"/>
<rect x="825.02" y="422.5" width="2" height="119" fill="#008000"/>
<rect x="830.72" y="422.5" width="2" height="119" fill="#008000"/>
<rect x="836.41" y="422.5" width="2" height="119" fill="#008000"/>
<rect x="842.11" y="422.5" width="2" height="119" fill="#008000"/>
<rect x="847.8" y="422.5" width="2" height="119" fill="#008000"/>
<rect x="853.5" y="422.5" width="2" height="119" fill="#008000"/>
<rect x="897.5" y="419.5" width="16" height="124" fill="#fff" stroke="#404040" stroke-width="1"/>
<rect x="898.5" y="420.5" width="14" height="122" fill="none" stroke="#c8c8c8" stroke-width="1"/>
<rect x="900.5" y="422.5" width="10" height="118" fill="none" stroke="#2e9a2e" stroke-width="1"/>
<line x1="901" y1="426.5" x2="910" y2="426.5" stroke="#ff0000" stroke-width="1.4" stroke-dasharray="3 1"/>
<line x1="901" y1="431" x2="910" y2="431" stroke="#ff0000" stroke-width="1.4" stroke-dasharray="3 1"/>
<line x1="901" y1="533.5" x2="910" y2="533.5" stroke="#ff0000" stroke-width="1.4" stroke-dasharray="3 1"/>
<line x1="901" y1="538.5" x2="910" y2="538.5" stroke="#ff0000" stroke-width="1.4" stroke-dasharray="3 1"/>
</svg>
<div class="a" style="left:328px;top:580px;width:613px;height:139px;box-sizing:border-box;border:1px solid #dcdcdc;"></div>
<div class="a" style="left:335px;top:579px;width:72px;height:3px;background:#f0f0f0;"></div>
<div class="t nv" style="left:337px;top:574px;transform:scaleX(0.87);">Reinforcement</div>
<div class="t nv" style="left:343px;top:592px;transform:scaleX(0.87);">Flexural Detail</div>
<div class="a" style="left:339px;top:608px;width:322px;height:99px;box-sizing:border-box;border:1px solid #fff;"></div>
<div class="a" style="left:340px;top:609px;width:320px;height:97px;box-sizing:border-box;border:1px solid #000;background:#fff;"></div>
<div class="a" style="left:341px;top:610px;width:318px;height:1px;background:#6e6e6e;"></div>
<div class="a" style="left:341px;top:610px;width:1px;height:95px;background:#6e6e6e;"></div>
<div class="a" style="left:360px;top:610px;width:1px;height:78px;background:#a0a0a0;"></div>
<div class="a" style="left:436px;top:611px;width:1px;height:32px;background:#e0e0e0;"></div>
<div class="a" style="left:505px;top:611px;width:1px;height:32px;background:#e0e0e0;"></div>
<div class="a" style="left:581px;top:611px;width:1px;height:32px;background:#e0e0e0;"></div>
<div class="a" style="left:657px;top:611px;width:1px;height:32px;background:#e0e0e0;"></div>
<div class="a" style="left:341px;top:643px;width:317px;height:1px;background:#a0a0a0;"></div>
<div class="t bk" style="left:368px;top:621px;transform:scaleX(0.87);">Location</div>
<div class="t bk" style="left:444px;top:621px;transform:scaleX(0.87);">Bar Size</div>
<div class="t bk" style="left:513px;top:614px;transform:scaleX(0.87);">Number of</div>
<div class="t bk" style="left:513px;top:626px;transform:scaleX(0.87);">Bars</div>
<div class="t bk" style="left:589px;top:614px;transform:scaleX(0.87);">Cover to</div>
<div class="t bk" style="left:589px;top:626px;transform:scaleX(0.87);">Centroid (in)</div>
<div class="a" style="left:341px;top:665px;width:19px;height:1px;background:#e3e3e3;"></div>
<div class="a" style="left:361px;top:644px;width:75px;height:21px;background:#0078d7;"></div>
<div class="a" style="left:436px;top:643px;width:1px;height:23px;background:#a0a0a0;"></div>
<div class="a" style="left:360px;top:665px;width:77px;height:1px;background:#a0a0a0;"></div>
<div class="t " style="left:364.5px;top:648px;color:#fff;transform:scaleX(0.87);">Top</div>
<div class="a" style="left:418px;top:645px;width:17px;height:17px;box-sizing:border-box;border:1px solid #fdf8f3;background:#f0f0f0;"></div>
<svg class="a" style="left:425px;top:653px" width="5" height="3" shape-rendering="crispEdges"><path d="M0 0h5v1h-1v1h-1v1h-1v-1h-1v-1h-1z" fill="#000"/></svg>
<div class="a" style="left:437px;top:644px;width:68px;height:21px;background:#ffffe0;"></div>
<div class="a" style="left:505px;top:643px;width:1px;height:23px;background:#a0a0a0;"></div>
<div class="a" style="left:436px;top:665px;width:70px;height:1px;background:#a0a0a0;"></div>
<div class="t " style="left:440.5px;top:648px;color:#000090;transform:scaleX(0.87);">#8</div>
<div class="a" style="left:487px;top:645px;width:17px;height:17px;box-sizing:border-box;border:1px solid #fdf8f3;background:#f0f0f0;"></div>
<svg class="a" style="left:494px;top:653px" width="5" height="3" shape-rendering="crispEdges"><path d="M0 0h5v1h-1v1h-1v1h-1v-1h-1v-1h-1z" fill="#000"/></svg>
<div class="a" style="left:506px;top:644px;width:75px;height:21px;background:#ffffe0;"></div>
<div class="a" style="left:581px;top:643px;width:1px;height:23px;background:#a0a0a0;"></div>
<div class="a" style="left:505px;top:665px;width:77px;height:1px;background:#a0a0a0;"></div>
<div class="t " style="left:509.5px;top:648px;color:#000090;transform:scaleX(0.87);">12</div>
<div class="a" style="left:582px;top:644px;width:75px;height:21px;background:#ffffe0;"></div>
<div class="a" style="left:657px;top:643px;width:1px;height:23px;background:#a0a0a0;"></div>
<div class="a" style="left:581px;top:665px;width:77px;height:1px;background:#a0a0a0;"></div>
<div class="t " style="left:585.5px;top:648px;color:#000090;transform:scaleX(0.87);">3.625</div>
<div class="a" style="left:341px;top:687px;width:19px;height:1px;background:#e3e3e3;"></div>
<div class="a" style="left:361px;top:666px;width:75px;height:21px;background:#d3d3d3;"></div>
<div class="a" style="left:436px;top:665px;width:1px;height:23px;background:#a0a0a0;"></div>
<div class="a" style="left:360px;top:687px;width:77px;height:1px;background:#a0a0a0;"></div>
<div class="t " style="left:364.5px;top:670px;color:#000090;transform:scaleX(0.87);">Bottom</div>
<div class="a" style="left:418px;top:667px;width:17px;height:17px;box-sizing:border-box;border:1px solid #fdf8f3;background:#f0f0f0;"></div>
<svg class="a" style="left:425px;top:675px" width="5" height="3" shape-rendering="crispEdges"><path d="M0 0h5v1h-1v1h-1v1h-1v-1h-1v-1h-1z" fill="#000"/></svg>
<div class="a" style="left:437px;top:666px;width:68px;height:21px;background:#e0ffff;"></div>
<div class="a" style="left:505px;top:665px;width:1px;height:23px;background:#a0a0a0;"></div>
<div class="a" style="left:436px;top:687px;width:70px;height:1px;background:#a0a0a0;"></div>
<div class="t " style="left:440.5px;top:670px;color:#000090;transform:scaleX(0.87);">#8</div>
<div class="a" style="left:487px;top:667px;width:17px;height:17px;box-sizing:border-box;border:1px solid #fdf8f3;background:#f0f0f0;"></div>
<svg class="a" style="left:494px;top:675px" width="5" height="3" shape-rendering="crispEdges"><path d="M0 0h5v1h-1v1h-1v1h-1v-1h-1v-1h-1z" fill="#000"/></svg>
<div class="a" style="left:506px;top:666px;width:75px;height:21px;background:#e0ffff;"></div>
<div class="a" style="left:581px;top:665px;width:1px;height:23px;background:#a0a0a0;"></div>
<div class="a" style="left:505px;top:687px;width:77px;height:1px;background:#a0a0a0;"></div>
<div class="t " style="left:509.5px;top:670px;color:#000090;transform:scaleX(0.87);">12</div>
<div class="a" style="left:582px;top:666px;width:75px;height:21px;background:#e0ffff;"></div>
<div class="a" style="left:657px;top:665px;width:1px;height:23px;background:#a0a0a0;"></div>
<div class="a" style="left:581px;top:687px;width:77px;height:1px;background:#a0a0a0;"></div>
<div class="t " style="left:585.5px;top:670px;color:#000090;transform:scaleX(0.87);">3.625</div>
<div class="t nv" style="left:660px;top:592px;transform:scaleX(0.87);">Shear Detail</div>
<div class="a" style="left:675px;top:608px;width:253px;height:99px;box-sizing:border-box;border:1px solid #fff;"></div>
<div class="a" style="left:676px;top:609px;width:251px;height:97px;box-sizing:border-box;border:1px solid #000;background:#fff;"></div>
<div class="a" style="left:677px;top:610px;width:249px;height:1px;background:#6e6e6e;"></div>
<div class="a" style="left:677px;top:610px;width:1px;height:95px;background:#6e6e6e;"></div>
<div class="a" style="left:696px;top:610px;width:1px;height:41px;background:#a0a0a0;"></div>
<div class="a" style="left:816px;top:611px;width:1px;height:19px;background:#e0e0e0;"></div>
<div class="a" style="left:924px;top:611px;width:1px;height:19px;background:#e0e0e0;"></div>
<div class="a" style="left:677px;top:630px;width:248px;height:1px;background:#a0a0a0;"></div>
<div class="t bk" style="left:704px;top:614px;transform:scaleX(0.87);">Bar Size</div>
<div class="t bk" style="left:824px;top:614px;transform:scaleX(0.87);">Bar Spacing (in)</div>
<div class="a" style="left:677px;top:650px;width:19px;height:1px;background:#e3e3e3;"></div>
<div class="a" style="left:697px;top:631px;width:119px;height:19px;background:#0078d7;"></div>
<div class="a" style="left:816px;top:630px;width:1px;height:21px;background:#a0a0a0;"></div>
<div class="a" style="left:696px;top:650px;width:121px;height:1px;background:#a0a0a0;"></div>
<div class="t " style="left:700.5px;top:633px;color:#fff;transform:scaleX(0.87);">#5</div>
<div class="a" style="left:798px;top:632px;width:17px;height:17px;box-sizing:border-box;border:1px solid #fdf8f3;background:#f0f0f0;"></div>
<svg class="a" style="left:805px;top:640px" width="5" height="3" shape-rendering="crispEdges"><path d="M0 0h5v1h-1v1h-1v1h-1v-1h-1v-1h-1z" fill="#000"/></svg>
<div class="a" style="left:817px;top:631px;width:107px;height:19px;background:#ffffe0;"></div>
<div class="a" style="left:924px;top:630px;width:1px;height:21px;background:#a0a0a0;"></div>
<div class="a" style="left:816px;top:650px;width:109px;height:1px;background:#a0a0a0;"></div>
<div class="t " style="left:820.5px;top:633px;color:#000090;transform:scaleX(0.87);">6</div>
<div class="a" style="left:563px;top:732px;width:67px;height:21px;box-sizing:border-box;border:2px solid #0078d7;background:#e1e1e1;"></div>
<div class="t bk" style="left:587.8px;top:735px;transform:scaleX(0.87);">OK</div>
<div class="a" style="left:667px;top:732px;width:67px;height:21px;box-sizing:border-box;border:1px solid #adadad;background:#e1e1e1;"></div>
<div class="t bk" style="left:682.7px;top:735px;transform:scaleX(0.89);">Cancel</div>
</body></html>
